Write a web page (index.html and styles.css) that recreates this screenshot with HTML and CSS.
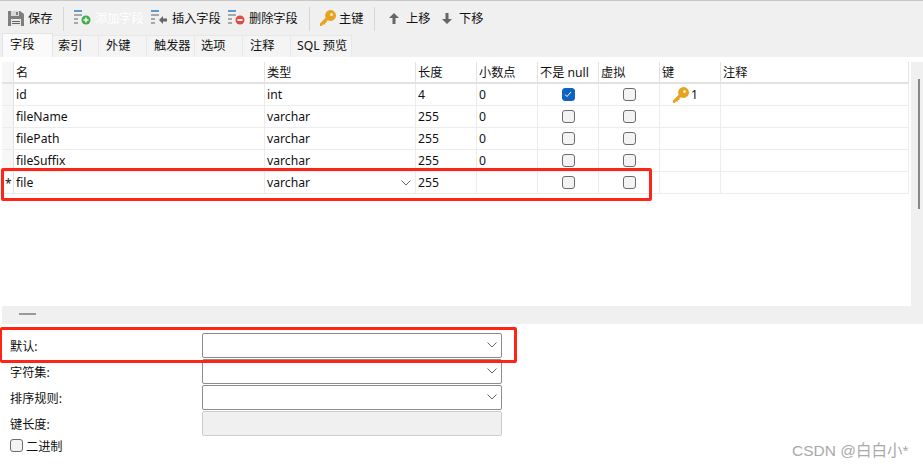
FILE: index.html
```html
<!DOCTYPE html>
<html lang="zh">
<head>
<meta charset="utf-8">
<title>字段</title>
<link rel="stylesheet" href="styles.css">
</head>
<body>
<div class="page">
  <header class="toolbar">
    <div class="tool save">
      <svg width="16" height="16" viewBox="0 0 16 16"><path d="M0 1h12l4 3v12H0z" fill="#7f7f7f"/><rect x="3" y="1" width="8" height="5" fill="#d8d8d8"/><rect x="8" y="2" width="2" height="3" fill="#7f7f7f"/><rect x="3" y="9" width="10" height="7" fill="#e8e8e8"/><rect x="4" y="11" width="8" height="1" fill="#666"/><rect x="4" y="13" width="8" height="1" fill="#666"/></svg>
      <span>保存</span>
    </div>
    <i class="sep"></i>
    <div class="tool add">
      <svg width="18" height="18" viewBox="0 0 18 18"><rect y="1" width="8" height="2" fill="#5b9bd5"/><rect y="5" width="8" height="2" fill="#a8a8a8"/><rect y="9" width="4" height="2" fill="#a8a8a8"/><rect y="13" width="4" height="2" fill="#a8a8a8"/><circle cx="12" cy="11" r="4.5" fill="#3fae49"/><path d="M12 8.500v5M9.500 11h5" stroke="#fff" stroke-width="1.500"/></svg>
      <span class="disabled">添加字段</span>
    </div>
    <div class="tool insert">
      <svg width="18" height="18" viewBox="0 0 18 18"><rect y="1" width="8" height="2" fill="#5b9bd5"/><rect y="5" width="8" height="2" fill="#a8a8a8"/><rect y="9" width="4" height="2" fill="#a8a8a8"/><rect y="13" width="4" height="2" fill="#a8a8a8"/><path d="M8 11l4-4v2.500h4v3h-4V15z" fill="#666"/></svg>
      <span>插入字段</span>
    </div>
    <div class="tool delete">
      <svg width="18" height="18" viewBox="0 0 18 18"><rect y="1" width="8" height="2" fill="#5b9bd5"/><rect y="5" width="8" height="2" fill="#a8a8a8"/><rect y="9" width="4" height="2" fill="#a8a8a8"/><rect y="13" width="4" height="2" fill="#a8a8a8"/><circle cx="12" cy="11" r="4.500" fill="#e5483f"/><rect x="9.500" y="10" width="5" height="2" fill="#fff"/></svg>
      <span>删除字段</span>
    </div>
    <i class="sep"></i>
    <div class="tool key">
      <svg width="16" height="16" viewBox="0 0 16 16"><path d="M10.500 0a5.500 5.500 0 1 1-2.700 10.300L6.500 11.500v1.500H5v1.500H3L1.500 16H0v-2.500l5.700-5.700A5.500 5.500 0 0 1 10.500 0z" fill="#e8a21e"/><circle cx="11.500" cy="4.500" r="1.500" fill="#fdf0cf"/></svg>
      <span>主键</span>
    </div>
    <i class="sep"></i>
    <div class="tool up">
      <svg width="10" height="11" viewBox="0 0 10 11"><path d="M5 0l5 5H6.500v6h-3V5H0z" fill="#666"/></svg>
      <span>上移</span>
    </div>
    <div class="tool down">
      <svg width="10" height="11" viewBox="0 0 10 11"><path d="M5 11L0 6h3.500V0h3v6H10z" fill="#666"/></svg>
      <span>下移</span>
    </div>
  </header>

  <nav class="tabs">
    <span class="tab active">字段</span>
    <span class="tab">索引</span>
    <span class="tab">外键</span>
    <span class="tab">触发器</span>
    <span class="tab">选项</span>
    <span class="tab">注释</span>
    <span class="tab">SQL 预览</span>
  </nav>

  <section class="main">
    <div class="grid-wrap">
      <div class="grid">
        <div class="row head">
          <div class="mark"></div><div class="c">名</div><div class="c">类型</div><div class="c">长度</div><div class="c">小数点</div><div class="c">不是 null</div><div class="c">虚拟</div><div class="c">键</div><div class="c">注释</div>
        </div>
        <div class="row">
          <div class="mark"></div><div class="c">id</div><div class="c">int</div><div class="c">4</div><div class="c">0</div>
          <div class="c center"><span class="cb on"><svg width="8" height="7" viewBox="0 0 8 7"><path d="M1 3.500l2 2 4-4.500" fill="none" stroke="#fff" stroke-width="1"/></svg></span></div>
          <div class="c center"><span class="cb"></span></div>
          <div class="c keycell"><svg width="16" height="16" viewBox="0 0 16 16"><path d="M10.500 0a5.500 5.500 0 1 1-2.700 10.300L6.500 11.500v1.500H5v1.500H3L1.500 16H0v-2.500l5.700-5.700A5.500 5.500 0 0 1 10.500 0z" fill="#e8a21e"/><circle cx="11.500" cy="4.500" r="1.500" fill="#fdf0cf"/></svg><span>1</span></div>
          <div class="c"></div>
        </div>
        <div class="row">
          <div class="mark"></div><div class="c">fileName</div><div class="c">varchar</div><div class="c">255</div><div class="c">0</div>
          <div class="c center"><span class="cb"></span></div><div class="c center"><span class="cb"></span></div><div class="c"></div><div class="c"></div>
        </div>
        <div class="row">
          <div class="mark"></div><div class="c">filePath</div><div class="c">varchar</div><div class="c">255</div><div class="c">0</div>
          <div class="c center"><span class="cb"></span></div><div class="c center"><span class="cb"></span></div><div class="c"></div><div class="c"></div>
        </div>
        <div class="row">
          <div class="mark"></div><div class="c">fileSuffix</div><div class="c">varchar</div><div class="c">255</div><div class="c">0</div>
          <div class="c center"><span class="cb"></span></div><div class="c center"><span class="cb"></span></div><div class="c"></div><div class="c"></div>
        </div>
        <div class="row">
          <div class="mark star">*</div><div class="c">file</div>
          <div class="c typecell"><span>varchar</span><svg width="10" height="6" viewBox="0 0 10 6"><path d="M.5.500L5 5 9.500.500" fill="none" stroke="#666"/></svg></div>
          <div class="c">255</div><div class="c"></div>
          <div class="c center"><span class="cb"></span></div><div class="c center"><span class="cb"></span></div><div class="c"></div><div class="c"></div>
        </div>
      </div>
      <div class="scrollbar"><div class="thumb"></div></div>
    </div>
    <div class="divider"><i></i></div>
    <div class="form">
      <div class="frow"><label>默认:</label><div class="select"><svg width="10" height="6" viewBox="0 0 10 6"><path d="M.5.500L5 5 9.500.500" fill="none" stroke="#666"/></svg></div></div>
      <div class="frow"><label>字符集:</label><div class="select"><svg width="10" height="6" viewBox="0 0 10 6"><path d="M.5.500L5 5 9.500.500" fill="none" stroke="#666"/></svg></div></div>
      <div class="frow"><label>排序规则:</label><div class="select"><svg width="10" height="6" viewBox="0 0 10 6"><path d="M.5.500L5 5 9.500.500" fill="none" stroke="#666"/></svg></div></div>
      <div class="frow"><label>键长度:</label><div class="input"></div></div>
      <div class="check"><span class="cb"></span><label>二进制</label></div>
    </div>
  </section>

  <div class="mark-box box-a"></div>
  <div class="mark-box box-b"></div>
  <div class="watermark">CSDN @白白小*</div>
</div>
</body>
</html>
```
FILE: styles.css
```css
* { box-sizing: border-box; }
html, body { margin: 0; padding: 0; }
body {
  background: #fff;
  font-family: "Noto Sans", "Noto Sans CJK SC", sans-serif;
  font-size: 12.2px;
  color: #111;
}
.page { position: relative; width: 923px; height: 468px; overflow: hidden; background: #f0f0f0; }

.toolbar {
  height: 33px;
  padding: 6px 0 0 8px;
  display: flex;
  align-items: flex-start;
  border-top: 1px solid #c8c8c8;
}
.tool { display: flex; align-items: center; height: 22px; gap: 5px; white-space: nowrap; }
.tool .disabled { color: #fff; }
.save { gap: 4px; width: 47px; }
.sep { display: block; width: 1px; height: 24px; background: #d6d6d6; margin-right: 10px; }
.save + .sep { margin-left: 8px; }
.add { width: 76px; gap: 3px; }
.insert { width: 77px; gap: 3px; margin-left: 1px; }
.delete { width: 75px; gap: 3px; }
.delete + .sep { margin-left: 6px; }
.key { width: 44px; gap: 3px; }
.key + .sep { margin-left: 10px; margin-right: 14px; }
.up { gap: 7px; width: 53px; }
.down { gap: 7px; }

.tabs { height: 24px; padding-left: 2px; display: flex; align-items: flex-end; }
.tab {
  height: 22px;
  width: 48px;
  padding-left: 7px;
  line-height: 20px;
  background: #f4f4f4;
  border-right: 1px solid #e8e8e8;
  border-top: 1px solid #e8e8e8;
}
.tab.active { height: 24px; width: 51px; padding-left: 7px; line-height: 21px; background: #fafafa; border: 1px solid #e4e4e4; border-bottom: 0; }
.tab:nth-child(2) { width: 46px; padding-left: 5px; }
.tab:nth-child(5) { padding-left: 6px; }
.tab:nth-child(7) { width: 61px; padding-left: 6px; }

.main { height: 411px; padding-left: 2px; background: #fff; }
.grid-wrap { height: 249px; display: flex; background: #fff; padding-top: 5px; }
.grid { width: 907px; }
.row {
  display: grid;
  grid-template-columns: 12px 251px 151px 61px 61px 61px 61px 61px 1fr;
  grid-template-rows: 100%;
  height: 22px;
  border-bottom: 1px solid #ececec;
}
.row.head { height: 22px; border-bottom: 2px solid #e2e2e2; }
.mark { background: #f7f7f7; border-right: 1px solid #e2e2e2; }
.star { background: #fff; padding: 3px 0 0 3px; line-height: 18px; font-size: 12px; overflow: hidden; }
.c { padding-left: 2px; line-height: 21px; border-right: 1px solid #ececec; white-space: nowrap; overflow: hidden; }
.head .c { border-right-color: #e2e2e2; line-height: 22px; }
.c.center { padding-left: 0; display: flex; align-items: center; justify-content: center; }
.cb {
  display: inline-flex;
  align-items: center;
  justify-content: center;
  width: 13px;
  height: 13px;
  border: 1px solid #6c6c6c;
  border-radius: 3px;
  background: #f3f3f3;
  flex: none;
}
.cb.on { background: #0f62c0; border-color: #0f62c0; }
.keycell { display: flex; align-items: center; gap: 2px; padding-left: 13px; }
.typecell { display: flex; align-items: flex-start; justify-content: space-between; padding-right: 4px; }
.typecell svg { margin-top: 8px; }
.scrollbar { width: 12px; margin-left: 2px; background: #f0f0f0; padding: 17px 0 0 7px; height: 100%; }
.thumb { width: 2px; height: 130px; background: #888; }

.divider { height: 18px; background: #f0f0f0; padding: 7px 0 0 17px; }
.divider i { display: block; width: 17px; height: 2px; background: #9a9a9a; }

.form { padding: 8px 0 0 8px; background: #fff; }
.frow { display: flex; align-items: center; height: 26px; }
.frow label { width: 192px; padding-top: 2px; }
.select, .input {
  width: 300px;
  height: 25px;
  border: 1px solid #8c8c8c;
  border-radius: 2px;
  background: #fff;
  display: flex;
  align-items: center;
  justify-content: flex-end;
  padding-right: 4px;
}
.input { background: #f0f0f0; border-color: #cdcdcd; }
.check { display: flex; align-items: center; gap: 3px; height: 19px; }

.mark-box { position: absolute; border: 3px solid #ff2516; border-radius: 2px; }
.box-a { left: 1px; top: 168px; width: 651px; height: 33px; }
.box-b { left: 0; top: 327px; width: 517px; height: 36px; border-left-width: 2px; }
.watermark {
  position: absolute;
  left: 792px;
  top: 438px;
  font-family: "Liberation Sans", "Noto Sans CJK SC", sans-serif;
  font-size: 15.5px;
  color: #a9a9a9;
}
```
